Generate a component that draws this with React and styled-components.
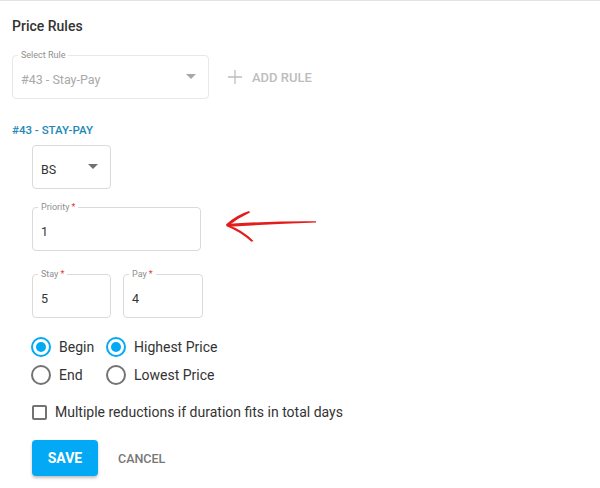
import React from "react";
import styled, { createGlobalStyle } from "styled-components";

const Global = createGlobalStyle`
  html, body { margin: 0; padding: 0; background: #fff; }
  body { font-family: Roboto, "Noto Sans", "Liberation Sans", sans-serif; color: #333; }
  * { box-sizing: border-box; }
`;

const Page = styled.div`
  width: 600px;
  height: 488px;
  border-top: 1px solid #e3e3e3;
  padding: 0 0 0 12px;
  overflow: hidden;
`;

const Title = styled.h2`
  margin: 15px 0 0;
  font-size: 14px;
  line-height: 20px;
  font-weight: 500;
  color: #333;
`;

const SelectRow = styled.div`
  display: flex;
  align-items: center;
  margin-top: 19px;
`;

const Field = styled.div`
  position: relative;
  width: ${(p) => p.$w}px;
  height: 44px;
  border: 1px solid ${(p) => (p.$disabled ? "#e8e8e8" : "#dadada")};
  border-radius: 4px;
  display: flex;
  align-items: center;
  padding: 4px 0 0 8px;
  font-size: 12.5px;
  color: ${(p) => (p.$disabled ? "#a9a9a9" : "#333")};
`;

const Label = styled.span`
  position: absolute;
  left: 5px;
  top: -7px;
  padding: 0 3px;
  background: #fff;
  font-size: 9px;
  line-height: 12px;
  color: #8f8f8f;
`;

const Req = styled.span`
  color: #e53935;
  margin-left: 2px;
`;

const Value = styled.span`
  flex: 1;
`;

const Caret = styled.span`
  width: 0;
  height: 0;
  border-left: 5px solid transparent;
  border-right: 5px solid transparent;
  border-top: 5px solid ${(p) => (p.$disabled ? "#a8a8a8" : "#707070")};
  margin: -6px 12px 0 0;
`;

const AddRule = styled.button`
  display: flex;
  align-items: center;
  gap: 10px;
  margin-left: 19px;
  padding: 0;
  border: none;
  background: none;
  font-family: inherit;
  font-size: 13px;
  font-weight: 500;
  color: #bdbdbd;
`;

const SectionTitle = styled.div`
  margin-top: 23px;
  font-size: 11.5px;
  line-height: 16px;
  font-weight: 500;
  color: #1e88b8;
`;

const Body = styled.div`
  padding-left: 20px;
`;

const Spaced = styled.div`
  margin-top: ${(p) => p.$top}px;
  display: flex;
  align-items: flex-start;
  gap: ${(p) => p.$gap || 0}px;
`;

const RadioGrid = styled.div`
  margin-top: 15px;
  display: grid;
  grid-template-columns: 75px auto;
  grid-auto-rows: 28px;
  margin-left: -1px;
`;

const Choice = styled.label`
  display: flex;
  align-items: center;
  gap: 8px;
  font-size: 14px;
  color: #333;
`;

const RadioCircle = styled.span`
  width: 20px;
  height: 20px;
  border-radius: 50%;
  border: 2px solid ${(p) => (p.$on ? "#03a9f4" : "#737373")};
  display: flex;
  align-items: center;
  justify-content: center;
  &::after {
    content: "";
    width: 10px;
    height: 10px;
    border-radius: 50%;
    background: ${(p) => (p.$on ? "#03a9f4" : "transparent")};
  }
`;

const CheckRow = styled.label`
  margin-top: 11px;
  height: 24px;
  display: flex;
  align-items: center;
  gap: 8px;
  font-size: 14px;
  color: #333;
`;

const Box = styled.span`
  width: 15px;
  height: 15px;
  border: 2px solid #737373;
  border-radius: 2px;
`;

const Actions = styled.div`
  margin-top: 16px;
  display: flex;
  align-items: center;
  gap: 12px;
`;

const SaveButton = styled.button`
  width: 66px;
  height: 36px;
  border: none;
  border-radius: 4px;
  background: #03a9f4;
  color: #fff;
  font-family: inherit;
  font-size: 14px;
  font-weight: 700;
  box-shadow: 0 2px 3px rgba(0, 0, 0, 0.25);
`;

const TextButton = styled.button`
  border: none;
  background: none;
  padding: 8px;
  font-family: inherit;
  font-size: 12.5px;
  font-weight: 500;
  color: #777;
`;

const Arrow = () => (
  <svg width="100" height="40" viewBox="0 0 100 40" style={{ marginTop: -2 }}>
    <path d="M5 19 Q50 16 95 16.3 L95 17.4 Q50 19 8 21.8 Z" fill="#e31c1c" />
    <path d="M5 19.5 Q15 10 28 6 L29 7.4 Q17 13 7.5 20.8 Z" fill="#e31c1c" />
    <path d="M6 19.5 Q22 25 32.5 36 L30.5 36.8 Q20 27 5 21 Z" fill="#e31c1c" />
  </svg>
);

const Plus = () => (
  <svg width="14" height="14" viewBox="0 0 14 14">
    <path d="M7 0 V14 M0 7 H14" stroke="#bdbdbd" strokeWidth="1.3" />
  </svg>
);

export default function App() {
  return (
    <>
      <Global />
      <Page>
        <Title>Price Rules</Title>
        <SelectRow>
          <Field $w={197} $disabled>
            <Label>Select Rule</Label>
            <Value>#43 - Stay-Pay</Value>
            <Caret $disabled />
          </Field>
          <AddRule>
            <Plus />
            ADD RULE
          </AddRule>
        </SelectRow>
        <SectionTitle>#43 - STAY-PAY</SectionTitle>
        <Body>
          <Spaced $top={7}>
            <Field $w={79}>
              <Value>BS</Value>
              <Caret />
            </Field>
          </Spaced>
          <Spaced $top={18} $gap={20}>
            <Field $w={169}>
              <Label>
                Priority<Req>*</Req>
              </Label>
              <Value>1</Value>
            </Field>
            <Arrow />
          </Spaced>
          <Spaced $top={23} $gap={12}>
            <Field $w={79}>
              <Label>
                Stay<Req>*</Req>
              </Label>
              <Value>5</Value>
            </Field>
            <Field $w={80}>
              <Label>
                Pay<Req>*</Req>
              </Label>
              <Value>4</Value>
            </Field>
          </Spaced>
          <RadioGrid>
            <Choice>
              <RadioCircle $on />
              Begin
            </Choice>
            <Choice>
              <RadioCircle $on />
              Highest Price
            </Choice>
            <Choice>
              <RadioCircle />
              End
            </Choice>
            <Choice>
              <RadioCircle />
              Lowest Price
            </Choice>
          </RadioGrid>
          <CheckRow>
            <Box />
            Multiple reductions if duration fits in total days
          </CheckRow>
          <Actions>
            <SaveButton>SAVE</SaveButton>
            <TextButton>CANCEL</TextButton>
          </Actions>
        </Body>
      </Page>
    </>
  );
}
